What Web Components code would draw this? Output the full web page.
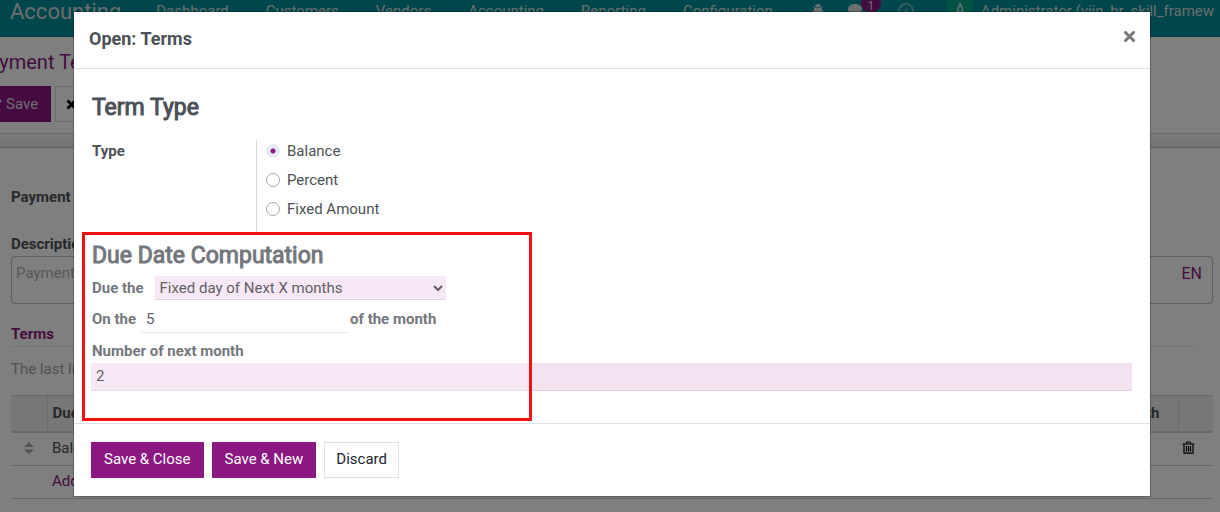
<!DOCTYPE html>
<html lang="en">
<head>
<meta charset="utf-8">
<title>Payment Terms</title>
<style>
  :root {
    --brand: #8a1782;
    --teal: #008e9a;
    --ink: #4c5157;
    --field: #f4e2f1;
    --line: #dee2e6;
  }
  html, body { margin: 0; height: 100%; }
  body {
    font: 15px/20px Roboto, sans-serif;
    color: var(--ink);
    background: #fff;
    overflow: hidden;
  }
</style>
</head>
<body>
<app-shell>
  <app-navbar slot="nav"></app-navbar>
  <control-panel slot="panel"></control-panel>
  <payment-form slot="form"></payment-form>
  <modal-dialog slot="modal" heading="Open: Terms">
    <term-form></term-form>
    <action-button slot="footer" primary>Save &amp; Close</action-button>
    <action-button slot="footer" primary>Save &amp; New</action-button>
    <action-button slot="footer">Discard</action-button>
  </modal-dialog>
</app-shell>

<script>
const define = (name, html, setup) => {
  const tpl = document.createElement('template');
  tpl.innerHTML = `<style>*{box-sizing:border-box}button,input,select,textarea{font:inherit;color:inherit;margin:0}a{color:inherit;text-decoration:none}</style>${html}`;
  customElements.define(name, class extends HTMLElement {
    constructor() {
      super();
      this.attachShadow({ mode: 'open' }).append(tpl.content.cloneNode(true));
    }
    connectedCallback() { if (setup) setup(this, this.shadowRoot); }
  });
};

define('app-shell', `
<style>
  :host { display: block; position: relative; height: 100vh; overflow: hidden; }
  .page { display: flex; flex-direction: column; }
  .backdrop { position: absolute; inset: 0; background: rgba(0,0,0,.5); }
  .layer { position: absolute; inset: 12px 70px auto 74px; }
</style>
<div class="page"><slot name="nav"></slot><slot name="panel"></slot><slot name="form"></slot></div>
<div class="backdrop"></div>
<div class="layer"><slot name="modal"></slot></div>`);

define('app-navbar', `
<style>
  :host { display: block; background: var(--teal); color: #d5dcdd; border-bottom: 1px solid #00707a; }
  nav { display: flex; align-items: flex-start; height: 36px; overflow: hidden; white-space: nowrap; padding-left: 10px; }
  .brand { font-size: 22px; line-height: 24px; margin-right: 35px; }
  .menu { display: flex; gap: 37px; margin-right: 39px; }
  .menu a, .user { line-height: 22px; }
  .tray { display: flex; align-items: flex-start; }
  .tray a { display: block; position: relative; height: 20px; width: 36px; }
  .tray a:nth-child(3) { width: 60px; margin-left: 14px; }
  .tray svg { display: block; margin-top: 3px; }
  .badge { position: absolute; left: 13px; top: -6px; width: 20px; height: 18px; border-radius: 9px; background: var(--brand); font-size: 12px; line-height: 24px; text-align: center; }
  .avatar { flex: none; width: 28px; height: 28px; margin: -6px 7px 0 -12px; border-radius: 50%; background: #00a487; text-align: center; font-size: 16px; line-height: 32px; }
</style>
<nav>
  <a class="brand" href="#">Accounting</a>
  <div class="menu">
    <a href="#">Dashboard</a><a href="#">Customers</a><a href="#">Vendors</a>
    <a href="#">Accounting</a><a href="#">Reporting</a><a href="#">Configuration</a>
  </div>
  <div class="tray">
    <a href="#" aria-label="Debug"><svg width="12" height="14" viewBox="0 0 12 14"><path d="M3 4a3 3 0 0 1 6 0z" fill="currentColor"/><path d="M2.500 5h7v4a3.500 4 0 0 1-7 0zM0 8h12M1 4l2 2M11 4 9 6M1 12l2-2M11 12l-2-2" fill="currentColor" stroke="currentColor" stroke-width="1"/></svg></a>
    <a href="#" aria-label="Messages"><svg width="16" height="14" viewBox="0 0 16 14"><path d="M7 1c4 0 7 2 7 5s-3 5-7 5c-1 0-2 0-2.500-.3C3 12 2 12.500 1 12.500 2 11.500 2 10.500 2 9.500.7 8.600 0 7.400 0 6c0-3 3-5 7-5z" fill="currentColor"/></svg><span class="badge">1</span></a>
    <a href="#" aria-label="Activities"><svg width="16" height="16" viewBox="0 0 16 16" opacity=".5"><circle cx="8" cy="8" r="7" fill="none" stroke="currentColor" stroke-width="2"/><path d="M8.500 4.500v4H5.500" fill="none" stroke="currentColor" stroke-width="1.500"/></svg></a>
  </div>
  <span class="avatar">A</span>
  <a class="user" href="#">Administrator (viin_hr_skill_framew</a>
</nav>`);

define('control-panel', `
<style>
  :host { display: block; overflow: hidden; border-bottom: 1px solid #d2d2d2; }
  .inner { margin-left: -24px; padding: 13px 0 11px; }
  h1 { margin: 0 0 12px; font-size: 20px; line-height: 24px; font-weight: 400; color: var(--brand); }
  .row { display: flex; gap: 4px; }
  button { display: flex; align-items: center; gap: 4px; height: 36px; padding: 0 12px; border: 1px solid #cfe0dd; background: #fff; color: #222; white-space: nowrap; }
  button.primary { background: var(--brand); border-color: var(--brand); color: #dcdcdc; }
  button:last-child { padding-left: 10px; }
</style>
<div class="inner">
  <h1>Payment Terms</h1>
  <div class="row">
    <button class="primary" type="button"><svg width="13" height="12" viewBox="0 0 13 12"><path d="m1 6 4 4 7-8" fill="none" stroke="currentColor" stroke-width="2.500"/></svg>Save</button>
    <button type="button"><svg width="11" height="11" viewBox="0 0 11 11"><path d="m1.500 1.500 8 8m0-8-8 8" fill="none" stroke="#000" stroke-width="3"/></svg>Discard</button>
  </div>
</div>`);

define('payment-form', `
<style>
  :host { display: block; background: linear-gradient(#f4f4f4, #e6e6e6) top / 100% 13px no-repeat; padding-top: 13px; }
  .sheet { border-top: 1px solid #c0c0c0; background: #fff; padding: 39px 7px 40px 11px; }
  label { display: block; font-weight: 700; color: #4c5157; }
  .description { margin-top: 27px; }
  .area { display: flex; align-items: flex-start; justify-content: space-between; height: 48px; margin-top: 2px; padding: 6px 10px 6px 4px; border: 1px solid #bfc3c7; border-radius: 4px; }
  textarea { flex: 1; height: 32px; padding: 0; border: 0; background: none; resize: none; outline: 0; }
  textarea::placeholder { color: #b0b0b0; }
  .lang { color: var(--brand); font-size: 16px; line-height: 22px; }
  .tab { display: block; margin: 20px 19px 0 0; padding-bottom: 2px; border-bottom: 1px solid #e6e6e6; color: var(--brand); font-weight: 700; }
  p { margin: 12px 0 16px; color: #a2a2a2; }
  table { width: 100%; border-collapse: collapse; table-layout: fixed; border-top: 1px solid #d0d0d0; }
  th, td { padding: 0 5px; text-align: left; }
  th { height: 36px; background: #eeeeee; font-weight: 700; border-right: 1px solid #d8dadd; border-bottom: 2px solid #d0d3d6; }
  th:last-child { border-right: 0; }
  td { height: 34px; padding-bottom: 2px; border-bottom: 1px solid #cecece; color: #4c5157; }
  tr:last-child td { height: 33px; }
  .num { text-align: right; padding-right: 18px; }
  td svg { display: block; margin: auto; }
  td a { color: var(--brand); }
  td:last-child { padding: 0 15px 2px 0; }
</style>
<div class="sheet">
  <label for="name">Payment Terms</label>
  <label class="description" for="desc">Description on the Invoice</label>
  <div class="area"><textarea id="desc" placeholder="Payment terms"></textarea><a class="lang" href="#">EN</a></div>
  <a class="tab" href="#">Terms</a>
  <p>The last line</p>
  <table>
    <colgroup><col style="width:36px"><col><col><col style="width:35px"></colgroup>
    <tr><th></th><th>Due Type</th><th class="num">Day of the month</th><th></th></tr>
    <tr><td><svg width="10" height="12" viewBox="0 0 10 12"><path d="M0 5l5-5 5 5zM0 7.500h10L5 12z" fill="#a5a8ac"/></svg></td><td>Balance</td><td></td>
      <td><svg width="13" height="14" viewBox="0 0 13 14"><path d="M.5 3h12M4 3l1-2h3l1 2M2 3v9.200h9V3M4.500 5v5.500M6.500 5v5.500M8.500 5v5.500" fill="none" stroke="#000" stroke-width="1.200"/></svg></td></tr>
    <tr><td></td><td><a href="#">Add a line</a></td><td></td><td></td></tr>
  </table>
</div>`);

define('modal-dialog', `
<style>
  :host { display: block; background: #fff; box-shadow: 0 0 0 1px rgba(0,0,0,.25); }
  header { display: flex; justify-content: space-between; align-items: flex-start; padding: 14px 14px 17px 15px; border-bottom: 1px solid var(--line); }
  h2 { margin: 0; font-size: 18px; line-height: 25px; font-weight: 700; }
  header button { display: block; padding: 5px 1px; border: 0; background: none; color: #777; }
  header svg { display: block; }
  footer { display: flex; gap: 8px; padding: 18px 17px; border-top: 1px solid var(--line); }
</style>
<section role="dialog" aria-labelledby="t">
  <header><h2 id="t"></h2>
    <button type="button" aria-label="Close"><svg width="11" height="11" viewBox="0 0 11 11"><path d="m1.500 1.500 8 8m0-8-8 8" fill="none" stroke="currentColor" stroke-width="3" stroke-linecap="round"/></svg></button>
  </header>
  <slot></slot>
  <footer><slot name="footer"></slot></footer>
</section>`, (el, root) => { root.querySelector('h2').textContent = el.getAttribute('heading'); });

define('action-button', `
<style>
  :host { display: block; }
  button { display: block; height: 36px; padding: 0 11px 2px; border: 1px solid var(--line); background: #fff; color: #212529; }
  :host([primary]) button { padding: 0 12px 2px; background: var(--brand); border-color: var(--brand); color: #fff; }
</style>
<button type="button"><slot></slot></button>`);

define('term-form', `
<style>
  :host { display: block; padding: 24px 18px 32px; }
  h3 { margin: 0; font-size: 23px; line-height: 30px; font-weight: 400; -webkit-text-stroke: 1px currentColor; }
  .type { display: flex; margin-top: 17px; }
  .name { width: 164px; font-weight: 700; padding-top: 1px; }
  fieldset { display: flex; flex-direction: column; gap: 9px; margin: 0; padding: 1px 0 13px 9px; border: 0; border-left: 1px solid #d5d8dc; height: 92px; }
  .opt { display: flex; align-items: center; gap: 7px; }
  input[type=radio] { appearance: none; width: 14px; height: 14px; border: 1px solid #a5a8ac; border-radius: 50%; background: #fff; }
  input[type=radio]:checked { border-color: #e6eaf0; background: radial-gradient(circle, var(--brand) 0 2px, #e6eaf0 3px); }
  .due { position: relative; padding-top: 9px; }
  .due label { font-weight: 700; }
  .line { display: flex; align-items: center; }
  select { width: 291px; height: 24px; margin-left: 11px; border: 0; border-bottom: 1px solid #d5ccd4; border-radius: 0; background: var(--field); padding: 0 0 0 1px; color: #33333a; }
  .first { margin-top: 5px; }
  .second { margin-top: 5px; }
  .text { height: 28px; padding: 0 5px; border: 0; border-bottom: 1px solid #e4e6e9; border-radius: 0; outline: 0; background: none; color: #33333a; }
  .day { width: 209px; margin-left: 5px; }
  .months { display: block; margin: 8px 0 2px; }
  .wide { display: block; width: calc(100% + 1px); margin-left: -1px; padding-bottom: 2px; background: var(--field); border-bottom-color: #ddd5dc; }
  .mark { position: absolute; left: -10px; top: 0; bottom: -30px; width: 450px; border: 3px solid #f01010; background: rgba(255,255,255,.22); pointer-events: none; }
</style>
<h3>Term Type</h3>
<div class="type">
  <span class="name" id="type">Type</span>
  <fieldset aria-labelledby="type">
    <label class="opt"><input type="radio" name="type" checked>Balance</label>
    <label class="opt"><input type="radio" name="type">Percent</label>
    <label class="opt"><input type="radio" name="type">Fixed Amount</label>
  </fieldset>
</div>
<div class="due">
  <h3>Due Date Computation</h3>
  <div class="line first"><label for="rule">Due the</label><select id="rule"><option>Fixed day of Next X months</option></select></div>
  <div class="line second"><label for="day">On the</label><input class="text day" id="day" value="5"><label for="day">of the month</label></div>
  <label class="months" for="months">Number of next month</label>
  <input class="text wide" id="months" value="2">
  <div class="mark"></div>
</div>`);
</script>
</body>
</html>
